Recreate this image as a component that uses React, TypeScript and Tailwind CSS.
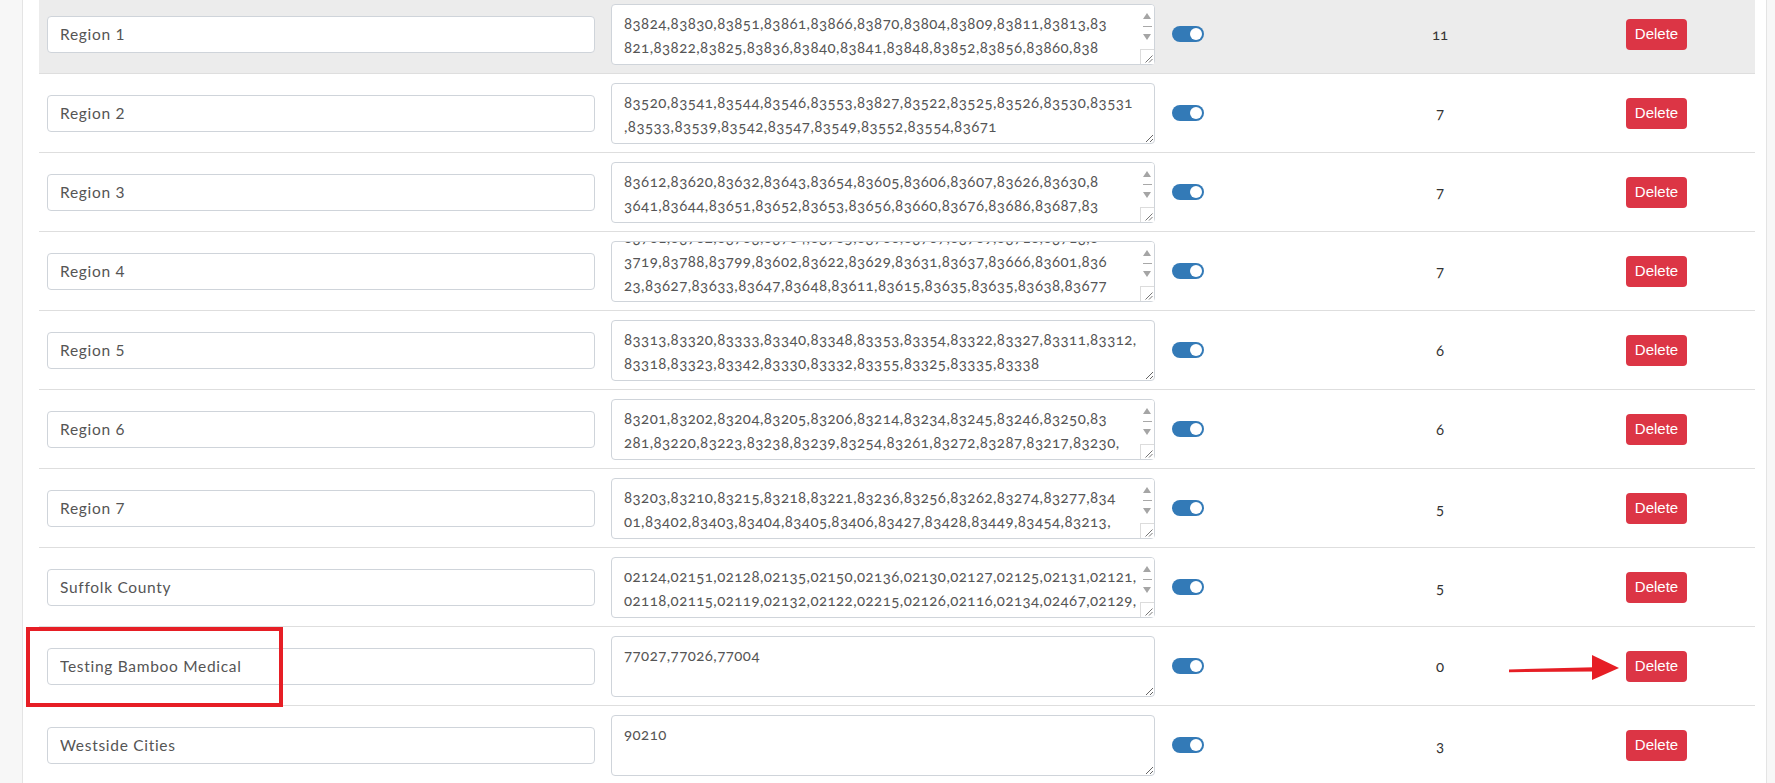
import React, { useEffect, useRef } from "react";

type Row = { name: string; lines: string[]; count: string; scrollBottom?: boolean };

const rows: Row[] = [
  {
    name: "Region 1",
    lines: [
      "83824,83830,83851,83861,83866,83870,83804,83809,83811,83813,83",
      "821,83822,83825,83836,83840,83841,83848,83852,83856,83860,838",
      "63,83864,83865",
    ],
    count: "11",
  },
  {
    name: "Region 2",
    lines: [
      "83520,83541,83544,83546,83553,83827,83522,83525,83526,83530,83531",
      ",83533,83539,83542,83547,83549,83552,83554,83671",
    ],
    count: "7",
  },
  {
    name: "Region 3",
    lines: [
      "83612,83620,83632,83643,83654,83605,83606,83607,83626,83630,8",
      "3641,83644,83651,83652,83653,83656,83660,83676,83686,83687,83",
      "688,83690",
    ],
    count: "7",
  },
  {
    name: "Region 4",
    lines: [
      "83701,83702,83703,83704,83705,83706,83707,83709,83710,83713,8",
      "3719,83788,83799,83602,83622,83629,83631,83637,83666,83601,836",
      "23,83627,83633,83647,83648,83611,83615,83635,83635,83638,83677",
    ],
    count: "7",
    scrollBottom: true,
  },
  {
    name: "Region 5",
    lines: [
      "83313,83320,83333,83340,83348,83353,83354,83322,83327,83311,83312,",
      "83318,83323,83342,83330,83332,83355,83325,83335,83338",
    ],
    count: "6",
  },
  {
    name: "Region 6",
    lines: [
      "83201,83202,83204,83205,83206,83214,83234,83245,83246,83250,83",
      "281,83220,83223,83238,83239,83254,83261,83272,83287,83217,83230,",
      "83240",
    ],
    count: "6",
  },
  {
    name: "Region 7",
    lines: [
      "83203,83210,83215,83218,83221,83236,83256,83262,83274,83277,834",
      "01,83402,83403,83404,83405,83406,83427,83428,83449,83454,83213,",
      "83214",
    ],
    count: "5",
  },
  {
    name: "Suffolk County",
    lines: [
      "02124,02151,02128,02135,02150,02136,02130,02127,02125,02131,02121,",
      "02118,02115,02119,02132,02122,02215,02126,02116,02134,02467,02129,",
      "02163",
    ],
    count: "5",
  },
  { name: "Testing Bamboo Medical", lines: ["77027,77026,77004"], count: "0" },
  { name: "Westside Cities", lines: ["90210"], count: "3" },
];

function FakeScrollbar() {
  return (
    <div className="pointer-events-none absolute bottom-[1px] right-[1px] top-[1px] flex w-[14px] flex-col items-center rounded-r-[3px] bg-white">
      <div className="mt-[8px] h-0 w-0 border-x-[4px] border-b-[6px] border-x-transparent border-b-[#a5a5a5]" />
      <div className="mt-[7px] h-px w-[9px] bg-[#a8a8a8]" />
      <div className="mt-[7px] h-0 w-0 border-x-[4px] border-t-[6px] border-x-transparent border-t-[#a5a5a5]" />
      <div className="mt-auto flex h-[15px] w-[14px] items-end justify-end border-l border-t border-[#dcdcdc] bg-white">
        <svg width="9" height="9" viewBox="0 0 9 9" className="mb-[1px] mr-[1px]">
          <path d="M8.5 1.5 L1.5 8.5 M8.5 5 L5 8.5" stroke="#777" strokeWidth="1" />
        </svg>
      </div>
    </div>
  );
}

function Zips({ lines, scrollBottom }: { lines: string[]; scrollBottom?: boolean }) {
  const ref = useRef<HTMLTextAreaElement>(null);
  const scrollable = lines.length > 2;
  useEffect(() => {
    if (scrollBottom && ref.current) ref.current.scrollTop = ref.current.scrollHeight;
  }, [scrollBottom]);
  return (
    <div className="relative">
      <textarea
        ref={ref}
        wrap="off"
        defaultValue={lines.join("\n")}
        className="block h-[61px] w-full resize-y overflow-hidden whitespace-pre rounded-[4px] border border-[#cfd4da] bg-white pl-3 pr-4 pt-[6px] pb-[4px] font-['Lato','Liberation_Sans',sans-serif] text-[15px] leading-[24px] tracking-[0.45px] text-[#555] [font-variant-numeric:oldstyle-nums] outline-none"
      />
      {scrollable && <FakeScrollbar />}
    </div>
  );
}

export default function App() {
  return (
    <div className="relative flex h-[783px] overflow-hidden bg-[#f7f7f7]">
      <div className="ml-[22px] w-[1745px] border-x border-[#e4e4e4] bg-white pl-4 pr-[11px]">
        <div className="-mt-[5px]">
          {rows.map((r, i) => (
            <div
              key={r.name}
              className={`grid h-[79px] grid-cols-[564px_560px_100px_354px_138px] items-center border-b border-[#dedede] ${
                i === 0 ? "bg-[#ececec]" : "bg-white"
              }`}
            >
              <div className="px-2">
                <input
                  defaultValue={r.name}
                  className="block h-[37px] w-full rounded-[4px] border border-[#cfd4da] bg-white px-3 font-['Lato','Liberation_Sans',sans-serif] text-[15.5px] tracking-[0.7px] text-[#555] outline-none"
                />
              </div>
              <div className="px-2">
                <Zips lines={r.lines} scrollBottom={r.scrollBottom} />
              </div>
              <div className="pl-[9px]">
                <div className="relative h-4 w-8 rounded-full bg-[#337ab7]">
                  <div className="absolute right-[2px] top-[2px] h-3 w-3 rounded-full bg-white" />
                </div>
              </div>
              <div className="text-center font-['Lato','Liberation_Sans',sans-serif] text-[15px] text-[#333] [font-variant-numeric:oldstyle-nums]">
                {r.count}
              </div>
              <div className="pl-[9px]">
                <button className="h-[31px] w-[61px] rounded-[4px] bg-[#dc3545] font-['Liberation_Sans',sans-serif] text-[15px] text-white">
                  Delete
                </button>
              </div>
            </div>
          ))}
        </div>
      </div>

      {/* annotation box */}
      <div className="pointer-events-none absolute left-[26px] top-[627px] h-[80px] w-[257px] border-[4px] border-[#e61e25]" />
      {/* annotation arrow */}
      <svg
        className="pointer-events-none absolute left-[1508px] top-[654px]"
        width="114"
        height="28"
        viewBox="0 0 114 28"
      >
        <path d="M1 15.5 L86 13.2 L86 17.6 L1 18.2 Z" fill="#e61e25" />
        <path d="M84 1 L111 14 L84 26 Z" fill="#e61e25" />
      </svg>
    </div>
  );
}
